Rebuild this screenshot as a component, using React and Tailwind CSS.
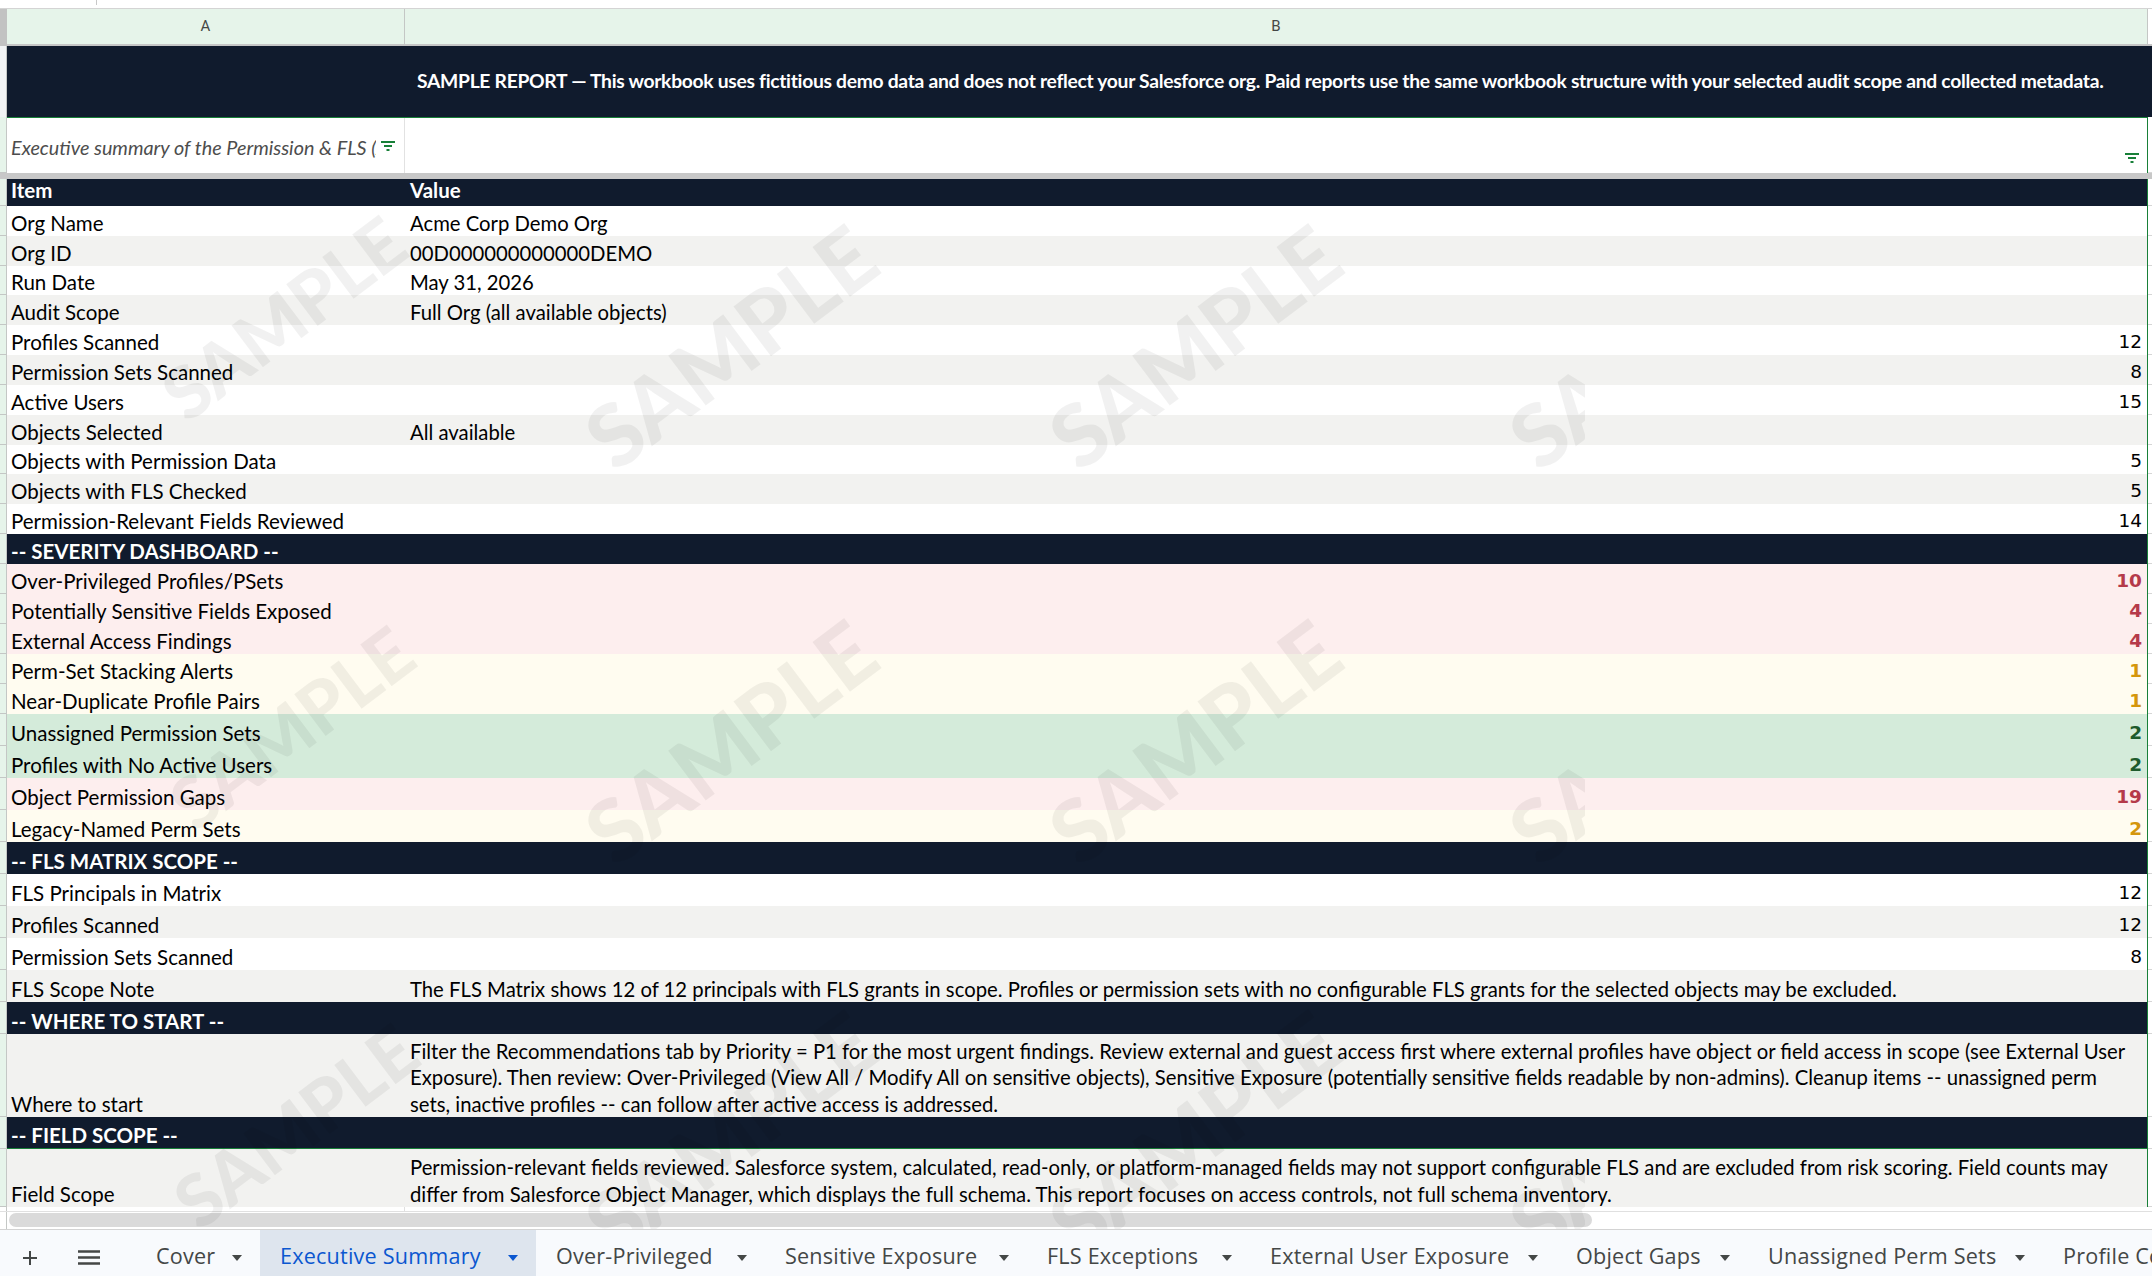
import React from 'react';

const W = 'bg-white';
const G = 'bg-[#f2f2f0]';
const P = 'bg-[#fdeeee]';
const Y = 'bg-[#fffcf0]';
const GR = 'bg-[#d4ebda]';
const RED = 'text-[#b53a4a] font-bold';
const ORG = 'text-[#d4960c] font-bold';
const DG = 'text-[#1e5b2c] font-bold';

const rows = [
  { t: 'head', a: 'Item', b: 'Value', h: 'h-[27px]' },
  { a: 'Org Name', b: 'Acme Corp Demo Org', bg: W, h: 'h-[30px]' },
  { a: 'Org ID', b: '00D000000000000DEMO', bg: G, h: 'h-[30px]' },
  { a: 'Run Date', b: 'May 31, 2026', bg: W, h: 'h-[29px]' },
  { a: 'Audit Scope', b: 'Full Org (all available objects)', bg: G, h: 'h-[30px]' },
  { a: 'Profiles Scanned', n: '12', bg: W, h: 'h-[30px]' },
  { a: 'Permission Sets Scanned', n: '8', bg: G, h: 'h-[30px]' },
  { a: 'Active Users', n: '15', bg: W, h: 'h-[30px]' },
  { a: 'Objects Selected', b: 'All available', bg: G, h: 'h-[30px]' },
  { a: 'Objects with Permission Data', n: '5', bg: W, h: 'h-[29px]' },
  { a: 'Objects with FLS Checked', n: '5', bg: G, h: 'h-[30px]' },
  { a: 'Permission-Relevant Fields Reviewed', n: '14', bg: W, h: 'h-[30px]' },
  { t: 'sec', a: '-- SEVERITY DASHBOARD --', h: 'h-[30px]' },
  { a: 'Over-Privileged Profiles/PSets', n: '10', nc: RED, bg: P, h: 'h-[30px]' },
  { a: 'Potentially Sensitive Fields Exposed', n: '4', nc: RED, bg: P, h: 'h-[30px]' },
  { a: 'External Access Findings', n: '4', nc: RED, bg: P, h: 'h-[30px]' },
  { a: 'Perm-Set Stacking Alerts', n: '1', nc: ORG, bg: Y, h: 'h-[30px]' },
  { a: 'Near-Duplicate Profile Pairs', n: '1', nc: ORG, bg: Y, h: 'h-[30px]' },
  { a: 'Unassigned Permission Sets', n: '2', nc: DG, bg: GR, h: 'h-[32px]' },
  { a: 'Profiles with No Active Users', n: '2', nc: DG, bg: GR, h: 'h-[32px]' },
  { a: 'Object Permission Gaps', n: '19', nc: RED, bg: P, h: 'h-[32px]' },
  { a: 'Legacy-Named Perm Sets', n: '2', nc: ORG, bg: Y, h: 'h-[32px]' },
  { t: 'sec', a: '-- FLS MATRIX SCOPE --', h: 'h-[32px]' },
  { a: 'FLS Principals in Matrix', n: '12', bg: W, h: 'h-[32px]' },
  { a: 'Profiles Scanned', n: '12', bg: G, h: 'h-[32px]' },
  { a: 'Permission Sets Scanned', n: '8', bg: W, h: 'h-[32px]' },
  {
    a: 'FLS Scope Note',
    b: 'The FLS Matrix shows 12 of 12 principals with FLS grants in scope. Profiles or permission sets with no configurable FLS grants for the selected objects may be excluded.',
    bg: G,
    h: 'h-[32px]',
  },
  { t: 'sec', a: '-- WHERE TO START --', h: 'h-[32px]' },
  {
    a: 'Where to start',
    lines: [
      'Filter the Recommendations tab by Priority = P1 for the most urgent findings. Review external and guest access first where external profiles have object or field access in scope (see External User',
      'Exposure). Then review: Over-Privileged (View All / Modify All on sensitive objects), Sensitive Exposure (potentially sensitive fields readable by non-admins). Cleanup items -- unassigned perm',
      'sets, inactive profiles -- can follow after active access is addressed.',
    ],
    bg: G,
    h: 'h-[83px]',
  },
  { t: 'sec', a: '-- FIELD SCOPE --', h: 'h-[32px]', greenBottom: true },
  {
    a: 'Field Scope',
    lines: [
      'Permission-relevant fields reviewed. Salesforce system, calculated, read-only, or platform-managed fields may not support configurable FLS and are excluded from risk scoring. Field counts may',
      'differ from Salesforce Object Manager, which displays the full schema. This report focuses on access controls, not full schema inventory.',
    ],
    bg: G,
    h: 'h-[58px]',
  },
];

const marks = [
  { c: 'left-[283px] top-[317px] text-[72px]' },
  { c: 'left-[730px] top-[346px] text-[86px]' },
  { c: 'left-[1194px] top-[346px] text-[86px]' },
  { c: 'left-[1654px] top-[346px] text-[86px]' },
  { c: 'left-[291px] top-[727px] text-[72px]' },
  { c: 'left-[730px] top-[741px] text-[86px]' },
  { c: 'left-[1194px] top-[741px] text-[86px]' },
  { c: 'left-[1654px] top-[741px] text-[86px]' },
  { c: 'left-[295px] top-[1125px] text-[72px]' },
  { c: 'left-[730px] top-[1132px] text-[86px]' },
  { c: 'left-[1194px] top-[1132px] text-[86px]' },
  { c: 'left-[1654px] top-[1132px] text-[86px]' },
];

const tabs = [
  { label: 'Cover', w: 'w-[59px]' },
  { label: 'Executive Summary', w: 'w-[211px]', active: true },
  { label: 'Over-Privileged', w: 'w-[164px]' },
  { label: 'Sensitive Exposure', w: 'w-[197px]' },
  { label: 'FLS Exceptions', w: 'w-[158px]' },
  { label: 'External User Exposure', w: 'w-[241px]' },
  { label: 'Object Gaps', w: 'w-[127px]' },
  { label: 'Unassigned Perm Sets', w: 'w-[230px]' },
  { label: 'Profile Comparison', w: 'w-[220px]' },
];

function FilterIcon() {
  return (
    <svg width="16" height="12" viewBox="0 0 16 12" className="shrink-0">
      <rect x="1" y="1" width="14" height="2" fill="#188038" />
      <rect x="4" y="5" width="8" height="2" fill="#188038" />
      <rect x="6.5" y="9" width="3" height="2" fill="#188038" />
    </svg>
  );
}

function Gutter({ className = 'bg-[#e6f4ea]' }) {
  return <div className={`w-[7px] shrink-0 border-r border-b border-[#c4c7c5] ${className}`} />;
}

function Tail() {
  return <div className="w-[4px] shrink-0 border-b border-[#d6d6d6] bg-white" />;
}

function DataRow({ r }) {
  if (r.t === 'head') {
    return (
      <div className={`flex ${r.h}`}>
        <Gutter />
        <div className="flex flex-1 bg-[#101b2d] border-r border-[#188038] text-white font-bold">
          <div className="w-[398px] shrink-0 flex items-start pl-[4px] whitespace-nowrap">
            <span className="leading-[22px]">{r.a}</span>
          </div>
          <div className="flex-1 flex items-start pl-[5px]">
            <span className="leading-[22px]">{r.b}</span>
          </div>
        </div>
        <Tail />
      </div>
    );
  }
  if (r.t === 'sec') {
    return (
      <div className={`flex ${r.h}`}>
        <Gutter />
        <div
          className={`flex flex-1 bg-[#101b2d] border-r border-[#188038] text-white font-bold ${
            r.greenBottom ? 'border-b border-b-[#188038]' : ''
          }`}
        >
          <div className="w-[398px] shrink-0 flex items-end pl-[4px] whitespace-nowrap">
            <span className="leading-[26px]">{r.a}</span>
          </div>
          <div className="flex-1" />
        </div>
        <Tail />
      </div>
    );
  }
  return (
    <div className={`flex ${r.h}`}>
      <Gutter />
      <div className={`flex flex-1 border-r border-[#188038] text-black ${r.bg}`}>
        <div className="w-[398px] shrink-0 flex items-end pl-[4px] whitespace-nowrap">
          <span className="leading-[26px]">{r.a}</span>
        </div>
        <div className={`flex-1 flex items-end pl-[5px] pr-[5px] ${r.n ? 'justify-end' : ''}`}>
          {r.b && <span className="leading-[26px] whitespace-nowrap text-[20.3px]">{r.b}</span>}
          {r.lines && (
            <div className="flex flex-col leading-[26.5px] whitespace-nowrap text-[20.3px]">
              {r.lines.map((l, i) => (
                <span key={i}>{l}</span>
              ))}
            </div>
          )}
          {r.n && (
            <span className={`font-['DejaVu_Sans',sans-serif] text-[18.5px] leading-[26px] ${r.nc || 'text-black'}`}>{r.n}</span>
          )}
        </div>
      </div>
      <Tail />
    </div>
  );
}

export default function App() {
  return (
    <div className="relative w-[2152px] h-[1276px] overflow-hidden bg-white font-['Lato',sans-serif] text-[20.5px] text-black">
      {/* top strip */}
      <div className="h-[9px] bg-white border-b border-[#d4d4d4] flex">
        <div className="ml-[96px] w-px h-[5px] bg-[#c8c8c8]" />
      </div>

      {/* column header */}
      <div className="flex h-[37px]">
        <div className="w-[7px] shrink-0 bg-[#c2c2c2] border-b-2 border-[#c2c2c2]" />
        <div className="w-[398px] shrink-0 bg-[#e6f4ea] border-r border-[#c4c7c5] border-b-2 border-b-[#c6c6c6] flex items-center justify-center font-['Roboto',sans-serif] text-[15px] text-[#444746]">
          A
        </div>
        <div className="flex-1 bg-[#e6f4ea] border-r border-[#c4c7c5] border-b-2 border-b-[#c6c6c6] flex items-center justify-center font-['Roboto',sans-serif] text-[15px] text-[#444746]">
          B
        </div>
        <div className="w-[4px] shrink-0 bg-white border-b-2 border-[#c6c6c6]" />
      </div>

      {/* banner */}
      <div className="flex h-[71px]">
        <div className="w-[7px] shrink-0 bg-[#f1f3f4] border-r border-[#c4c7c5]" />
        <div className="flex-1 bg-[#101b2d] flex items-center pl-[410px] text-white font-bold whitespace-nowrap text-[19.3px] tracking-[-0.3px]">
          SAMPLE REPORT — This workbook uses fictitious demo data and does not reflect your Salesforce org. Paid reports use the same workbook structure with your selected audit scope and collected metadata.
        </div>
        <div className="w-[4px] shrink-0 bg-[#101b2d]" />
      </div>

      {/* row 2 */}
      <div className="flex h-[56px]">
        <Gutter />
        <div className="flex flex-1 bg-white border-t border-[#188038] border-r border-r-[#188038]">
          <div className="w-[398px] shrink-0 flex items-center border-r border-[#e2e2e2] pl-[4px] pr-[8px]">
            <span className="italic text-[#4d4d4d] whitespace-nowrap overflow-hidden w-[368px] leading-[26px] mt-[2px] text-[19.8px]">
              Executive summary of the Permission &amp; FLS (Audit)
            </span>
            <span className="ml-[4px]">
              <FilterIcon />
            </span>
          </div>
          <div className="flex-1 flex items-end justify-end pr-[7px] pb-[9px]">
            <FilterIcon />
          </div>
        </div>
        <Tail />
      </div>

      {/* frozen separator */}
      <div className="h-[6px] bg-[#c8c8c8]" />

      {/* data rows */}
      {rows.map((r, i) => (
        <DataRow key={i} r={r} />
      ))}

      {/* gap below grid */}
      <div className="flex h-[4px]">
        <div className="w-[7px] shrink-0 border-r border-[#c4c7c5]" />
        <div className="w-[398px] shrink-0 border-r border-[#e0e0e0]" />
        <div className="flex-1" />
      </div>

      {/* scrollbar */}
      <div className="flex h-[18px] items-start border-t border-[#e0e0e0]">
        <div className="w-[7px] shrink-0 h-full border-r border-[#c4c7c5]" />
        <div className="ml-[2px] mt-[1px] w-[1583px] h-[14px] rounded-full bg-[#dadada]" />
      </div>

      {/* tab bar */}
      <div className="flex h-[47px] items-start bg-[#f8fafd] border-t border-[#d3d3d3] font-['Open_Sans',sans-serif] text-[21.6px] text-[#444746] whitespace-nowrap">
        <div className="w-[60px] shrink-0 flex justify-center pt-[20px]">
          <svg width="16" height="16" viewBox="0 0 16 16">
            <path d="M8 1v14M1 8h14" stroke="#444746" strokeWidth="2" />
          </svg>
        </div>
        <div className="w-[58px] shrink-0 flex justify-center pt-[20px]">
          <svg width="22" height="15" viewBox="0 0 22 15">
            <path d="M0 1.5h22M0 7.5h22M0 13.5h22" stroke="#444746" strokeWidth="2.4" />
          </svg>
        </div>
        <div className="w-[18px] shrink-0" />
        {tabs.map((t) => (
          <div
            key={t.label}
            className={`flex items-start h-full shrink-0 pl-[20px] pr-[18px] pt-[11px] ${
              t.active ? 'bg-[#dee5ee] text-[#0b57d0] font-medium' : ''
            }`}
          >
            <span className={`${t.w} leading-[30px] tracking-[0.2px]`}>{t.label}</span>
            <svg width="10" height="6" viewBox="0 0 10 6" className="ml-[17px] mt-[14px] shrink-0">
              <path d="M0 0h10L5 6z" fill={t.active ? '#0b57d0' : '#444746'} />
            </svg>
          </div>
        ))}
      </div>

      {/* SAMPLE watermark overlay */}
      <div className="pointer-events-none absolute left-0 top-0 w-[1585px] h-[1229px] overflow-hidden">
        {marks.map((m, i) => (
          <span
            key={i}
            className={`absolute ${m.c} -translate-x-1/2 -translate-y-1/2 -rotate-[37deg] font-black text-[rgba(0,0,0,0.055)] font-['Lato',sans-serif] leading-none whitespace-nowrap`}
          >
            SAMPLE
          </span>
        ))}
      </div>
    </div>
  );
}
